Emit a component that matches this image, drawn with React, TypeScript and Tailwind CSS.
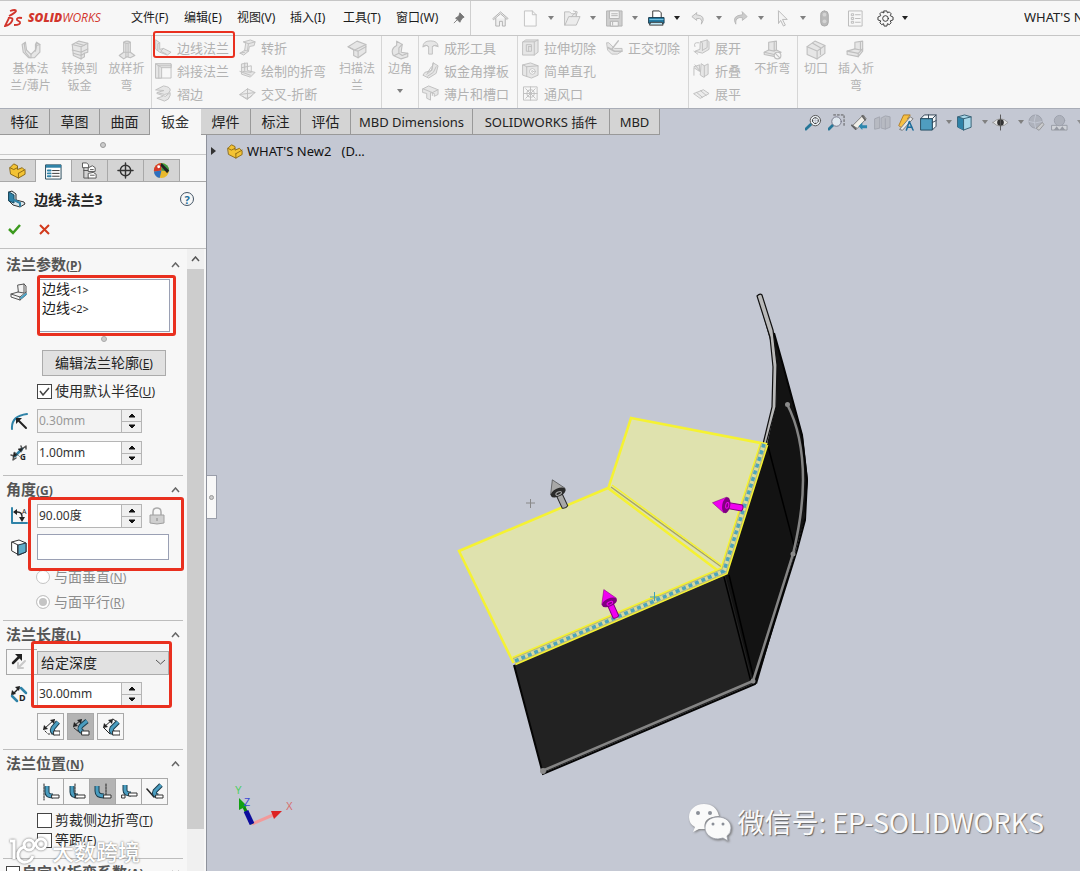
import React, { useState } from "react";

type IconProps = { children: React.ReactNode; size?: number; box?: number };

function Svg({ children, size = 18, box = 18 }: IconProps) {
  return (
    <svg width={size} height={size} viewBox={`0 0 ${box} ${box}`} fill="none" strokeLinejoin="round" strokeLinecap="round" className="shrink-0" aria-hidden="true">
      {children}
    </svg>
  );
}

const G = "#bfbfbf";
const L = "#e6e6e6";

/* Greyed ribbon drawings */
const ribbonIcons: Record<string, React.ReactNode> = {
  base: <g stroke={G} fill={L}><path d="M1 4l3-2 1 7 4 4 4-4 1-7 3 2v7l-5 5H7l-5-5z" /><path d="M4 2l-1 2 1 7 4 5M14 2l-1 2v5M9 13v3M17 4l-3 1-1 5" fill="none" /></g>,
  convert: <g stroke={G} fill={L}><path d="M2 4l6-3 8 2v8l-3 1v3l-3 2-7-3z" /><path d="M2 4l8 2 6-3M10 6v5l6-3M2 9l8 2v6M3 12l7 2 3-2M6 3l7 2" fill="none" /></g>,
  loft: <g stroke={G} fill={L}><path d="M6 2q3-2 6 0v9l4 3-4 2-3-1-3 2-4-3 4-3z" /><path d="M6 2q3 2 6 0M6 11h6M8 3v12M10 3v12" fill="none" /></g>,
  edge: <g stroke={G} fill={L}><path d="M1 1l4 3v7l4-1 8 4-4 3-8-3-4-3z" /><path d="M5 4L3 5v7M9 10l-3 3 6 3" fill="none" /></g>,
  miter: <g stroke={G} fill={L}><path d="M1 2h16v15H1z" fill="#f7f7f7" /><path d="M1 2h16v4H7v11H1z" /><path d="M3 4h14M4 5v12M1 2l6 4" fill="none" /></g>,
  hem: <g stroke={G} fill={L}><path d="M1 5l8-4q8 1 7 5t-6 4l-8-2 7-2z" /><path d="M2 9l9 3 5-4v3q-1 5-6 6l-8-3 6-2" /></g>,
  jog: <g stroke={G} fill={L}><path d="M5 3l7-2 5 2-1 4-5 1-1 5-5 4-4-2 5-3 1-7z" /><path d="M5 3l5 2 7-2M10 5l-1 7M6 12l4 1M1 15l5-1" fill="none" /></g>,
  sketchBend: <g stroke={G} fill={L}><path d="M3 2l6-1v8l8 2-5 5-9-3z" /><path d="M3 6l10-2v7L4 10M1 10l11 4M6 1v8" fill="none" /></g>,
  cross: <g stroke={G} fill="#ececec"><path d="M1 10l8-6 8 4-8 7z" /><path d="M9 4v11M1 10l16-2M4 12q5 5 10-1" fill="none" /></g>,
  sweep: <g stroke={G} fill={L}><path d="M1 6l8-5 8 3v7l-7 5-4-2V9z" /><path d="M1 6l6 3 10-5M6 9l4 1v6M10 10l7-4" fill="none" /></g>,
  corner: <g stroke={G} fill={L}><path d="M6 1l5 3-1 7 6 1v3l-6 2-7-3q-3-6 3-9z" /><path d="M11 4L8 7v5l3 2 5-2M8 12l-4 2" fill="none" /></g>,
  form: <g stroke={G} fill={L}><path d="M1 8Q1 2 9 2t8 6l-4-1-2 1v8H7V8L5 7z" /><path d="M1 8q3-3 6 0M11 8q3-3 6 0" fill="none" /></g>,
  gusset: <g stroke={G} fill={L}><path d="M12 1l5 3-2 8-8 5-6-3 2-3 7-2z" /><path d="M12 1l-2 8-5 4M15 5l-3 6-6 4M10 5l-4 6" fill="none" /></g>,
  slot: <g stroke={G} fill={L}><path d="M1 4l6-3 10 4v5l-4 2v-3l-4-1v8l-4-2V9L1 8z" /><path d="M1 4l10 4 6-3M11 8v3" fill="none" /></g>,
  cut: <g stroke={G} fill={L}><path d="M1 3l3-2h13v13l-4 3H1z" /><path d="M1 3h12l4-2M13 3v14M5 6h5v7H5zM7 8v5M7 8h3" fill="none" /></g>,
  hole: <g stroke={G} fill={L}><path d="M1 3l8-2 8 3v10l-7 3-9-3z" /><path d="M1 3l4 2v10M5 5l12-1" fill="none" /><circle cx="11" cy="10" r="3" fill="#fff" /><circle cx="11" cy="10" r="1" fill="none" /></g>,
  vent: <g stroke={G}><path d="M2 2h14v14H2zM2 9h14M9 2v14M4 4l10 10M14 4L4 14" /><circle cx="9" cy="9" r="4" /></g>,
  normal: <g stroke={G} fill={L}><path d="M1 4h2l6 6h8v3l-5 3H6l-4-4z" /><path d="M13 2L6 11M2 9l7 4h8" fill="none" strokeWidth="1.6" /></g>,
  unfold: <g stroke={G} fill={L}><path d="M8 3l7-2 2 2v8l-7 4-8-2 5-2z" /><path d="M8 3l2 1v8M2 8q-2-5 4-4M1 13l4 3M15 1v8l-5 3" fill="none" /></g>,
  fold: <g stroke={G} fill={L}><path d="M9 2l3 2 4-2v11l-5 3-3-2z" /><path d="M12 4v12M1 14V6l6 4V3L1 5" /><path d="M2 3l5 6" /></g>,
  flatten: <g stroke={G} fill="#ececec"><path d="M1 9l10-4 6 4-9 5z" /><path d="M4 8l6 5M8 6l6 5" fill="none" /></g>,
  nobend: <g stroke={G} fill={L}><path d="M6 2l7-1v8l4 2-5 4-10-2v-2l4-2z" /><path d="M6 9l5 1 2-1M2 11l9 2 6-2M11 2v8" fill="none" /><circle cx="14" cy="14" r="3" fill="#f7f7f7" /><path d="M12 12l4 4" /></g>,
  rip: <g stroke={G} fill={L}><path d="M1 6l7-5 9 4v7l-7 5-9-4z" /><path d="M1 6l9 4 7-5M10 10v7M6 3l7 4v6" fill="none" /></g>,
  insert: <g stroke={G} fill={L}><path d="M8 2l7-1v9l-4 5-10-2v-3l7-2z" /><path d="M8 8l5 1 2-1M1 10l10 2v3M11 12l4-4M13 2v7" fill="none" /></g>,
};

type LargeProps = { icon: string; lines: string[]; width: string; caret?: boolean };

function LargeTool({ icon, lines, width, caret }: LargeProps) {
  return (
    <button className={`flex flex-col items-center ${width} pt-1 text-[12px] leading-[17px] text-[#b2b2b2]`}>
      <Svg size={20}>{ribbonIcons[icon]}</Svg>
      <span className="flex flex-col items-center whitespace-nowrap">
        {lines.map((l) => <span key={l}>{l}</span>)}
      </span>
      {caret && <span className="mt-3"><Caret /></span>}
    </button>
  );
}

function SmallTool({ icon, label, marked }: { icon: string; label: string; marked?: boolean }) {
  return (
    <button className="relative flex h-[23px] items-center gap-[5px] text-[13px] leading-[18px] whitespace-nowrap text-[#b2b2b2]">
      <Svg size={17}>{ribbonIcons[icon]}</Svg>
      {label}
      {marked && <span className="pointer-events-none absolute -top-[5px] -left-[2px] z-10 h-[27px] w-[82px] rounded-[3px] border-[2px] border-[#e9301f]" />}
    </button>
  );
}

function ToolColumn({ items, width }: { items: [string, string][]; width: string }) {
  return (
    <div className={`flex flex-col items-start ${width}`}>
      {items.map(([icon, label]) => <SmallTool key={label} icon={icon} label={label} marked={icon === "edge"} />)}
    </div>
  );
}

function Caret({ dark }: { dark?: boolean }) {
  return (
    <svg width="6" height="4" viewBox="0 0 6 4" aria-hidden="true">
      <path d="M0 0h6L3 4z" fill={dark ? "#222" : "#808080"} />
    </svg>
  );
}

function Header() {
  const menus = ["文件(F)", "编辑(E)", "视图(V)", "插入(I)", "工具(T)", "窗口(W)"];
  return (
    <header className="flex h-9 shrink-0 items-center border-y border-[#c6c6c6] bg-[#f7f7f7]">
      <div className="flex w-[124px] shrink-0 items-center gap-[5px] pl-1 text-[#d2352c]">
        <svg width="19" height="19" viewBox="0 0 19 19" fill="none" stroke="currentColor" strokeWidth="1.8" aria-label="DS">
          <path d="M6 2q6-2 6 0-1 2-7 5M4 9q6-1 4 3-2 4-7 5l4-8" />
          <path d="M18 9q-6-1-5 2l3 2q1 3-6 3" />
        </svg>
        <span className="font-['Open_Sans'] text-[12px] leading-4 italic"><b className="font-extrabold">SOLID</b>WORKS</span>
      </div>
      <nav className="flex h-full w-[347px] shrink-0 items-center border-r border-[#cfcfcf] pl-[7px] text-[12px] whitespace-nowrap text-[#1c1c1c]">
        {menus.map((m) => <button key={m} className="w-[53px] shrink-0 text-left">{m}</button>)}
        <button aria-label="Pin">
          <svg width="12" height="12" viewBox="0 0 14 14" className="ml-1" fill="#777" stroke="#777"><path d="M8 1l5 5-2 1-2 3-1 2-5-5 2-1 2-2zM5 9l-4 4" /></svg>
        </button>
      </nav>
      <div className="flex shrink-0 items-center pl-[15px]">
        <Quick width="w-7" label="Home"><path d="M1 9l8-7 8 7-1 1-7-6-7 6zM4 9v8h4v-5h3v5h3V9" stroke="#b0b0b0" fill="#efefef" /></Quick>
        <Quick label="New" caret><path d="M3 1h8l4 4v12H3zM11 1v4h4" stroke="#c2c2c2" fill="#fafafa" /></Quick>
        <Quick label="Open" caret><path d="M1 2h5l2 2h5v3h4l-4 9H1zM1 16l4-9h8" stroke="#bcbcbc" fill="#ececec" /><path d="M8 7l5-5M10 1l4 1-1 4" stroke="#bcbcbc" /></Quick>
        <Quick label="Save" caret><path d="M1 1h16v16H1z" stroke="#b2b2b2" fill="#cfcfcf" /><path d="M4 1h10v8H4zM5 12h8v5H5z" fill="#f2f2f2" stroke="#b2b2b2" /><path d="M6 4h6M6 6h6M7 13v3" stroke="#b2b2b2" /></Quick>
        <Quick label="Print" caret dark><path d="M5 8V1h7l2 2v5" fill="#fff" stroke="#333" /><path d="M1 8h16v6H1z" fill="#257ca4" stroke="#15384b" /><path d="M3 13h12l1 3H2z" fill="#bde6f4" stroke="#333" /><path d="M2 10h14" stroke="#83c8e4" /></Quick>
        <Quick label="Undo" caret><path d="M7 3L2 7l5 4V9q7-1 5 6 6-9-5-10z" fill="#e2e2e2" stroke="#b9b9b9" /></Quick>
        <Quick label="Redo" caret><path d="M11 2l5 5-5 4V8q-8-1-7 7-5-9 7-10z" fill="#ccc" stroke="#b9b9b9" /></Quick>
        <Quick label="Select" caret><path d="M5 1l9 9H9l3 6-2 1-3-6-2 3z" fill="#f4f4f4" stroke="#b9b9b9" /></Quick>
        <Quick label="Rebuild"><rect x="5" y="1" width="8" height="16" rx="4" fill="#bababa" stroke="#a8a8a8" /><circle cx="9" cy="5" r="2" fill="#d4d4d4" /><circle cx="9" cy="12" r="2" fill="#d4d4d4" /></Quick>
        <Quick width="w-[30px]" label="File properties"><path d="M2 1h14v16H2zM5 4h2v2H5zM5 8h2v2H5zM5 12h2v2H5zM9 5h5M9 9h5M9 13h5" stroke="#bababa" /></Quick>
        <Quick width="w-[30px]" label="Options" caret dark>
          <path d="M7.500 1h3l.5 2 2-1 2 2-1 2 3 1.500v3l-3 1 1 2-2 2-2-1-.5 2.500h-3L7 14.500l-2 1-2-2 1-2-3-1v-3L4 6 3 4l2-2 2 1z" stroke="#333" /><circle cx="9" cy="9" r="3" stroke="#333" />
        </Quick>
      </div>
      <div className="ml-auto w-14 shrink-0 overflow-hidden text-[13px] whitespace-nowrap text-[#222]">WHAT'S New2</div>
    </header>
  );
}

function Quick({ children, label, width = "w-8", caret, dark }: { children: React.ReactNode; label: string; width?: string; caret?: boolean; dark?: boolean }) {
  return (
    <button aria-label={label} className="flex h-8 items-center">
      <span className={`flex justify-center ${width}`}><Svg size={17}>{children}</Svg></span>
      {caret && <span className="flex w-[10px] justify-center"><Caret dark={dark} /></span>}
    </button>
  );
}

function Ribbon() {
  return (
    <div className="flex h-[72px] shrink-0 bg-[#f7f7f7] *:border-[#d6d6d6]">
      <div className="flex w-[152px] shrink-0 border-r pl-[6px]">
        <LargeTool icon="base" lines={["基体法", "兰/薄片"]} width="w-[49px]" />
        <LargeTool icon="convert" lines={["转换到", "钣金"]} width="w-[49px]" />
        <LargeTool icon="loft" lines={["放样折", "弯"]} width="w-[45px]" />
      </div>
      <div className="flex w-[230px] shrink-0 border-r pl-[3px]">
        <ToolColumn width="w-[84px]" items={[["edge", "边线法兰"], ["miter", "斜接法兰"], ["hem", "褶边"]]} />
        <ToolColumn width="w-[95px]" items={[["jog", "转折"], ["sketchBend", "绘制的折弯"], ["cross", "交叉-折断"]]} />
        <LargeTool icon="sweep" lines={["扫描法", "兰"]} width="w-[46px]" />
      </div>
      <div className="flex w-[37px] shrink-0 border-r">
        <LargeTool icon="corner" lines={["边角"]} width="w-full" caret />
      </div>
      <div className="flex w-[99px] shrink-0 border-r pl-[3px]">
        <ToolColumn width="w-full" items={[["form", "成形工具"], ["gusset", "钣金角撑板"], ["slot", "薄片和槽口"]]} />
      </div>
      <div className="flex w-[171px] shrink-0 border-r pl-1">
        <ToolColumn width="w-[84px]" items={[["cut", "拉伸切除"], ["hole", "简单直孔"], ["vent", "通风口"]]} />
        <ToolColumn width="w-[80px]" items={[["normal", "正交切除"]]} />
      </div>
      <div className="flex w-[109px] shrink-0 border-r pl-1">
        <ToolColumn width="w-[55px]" items={[["unfold", "展开"], ["fold", "折叠"], ["flatten", "展平"]]} />
        <LargeTool icon="nobend" lines={["不折弯"]} width="w-[50px]" />
      </div>
      <div className="flex">
        <LargeTool icon="rip" lines={["切口"]} width="w-[36px]" />
        <LargeTool icon="insert" lines={["插入折", "弯"]} width="w-[44px]" />
      </div>
    </div>
  );
}

const tabs: [string, string][] = [
  ["特征", "w-[50px]"],
  ["草图", "w-[50px]"],
  ["曲面", "w-[50px]"],
  ["钣金", "w-[51px]"],
  ["焊件", "w-[50px]"],
  ["标注", "w-[50px]"],
  ["评估", "w-[50px]"],
  ["MBD Dimensions", "w-[122px]"],
  ["SOLIDWORKS 插件", "w-[137px]"],
  ["MBD", "w-[50px]"],
];

function TabBar() {
  const [active, setActive] = useState("钣金");
  return (
    <div className="flex h-[27px] shrink-0 border-t border-[#a9adb7] bg-[#c4c8d3]">
      <div className="flex shrink-0" role="tablist">
        {tabs.map(([name, width]) => (
          <button
            key={name}
            role="tab"
            aria-selected={active === name}
            onClick={() => setActive(name)}
            className={`${width} border-r leading-6 whitespace-nowrap ${active === name ? "border-[#f7f7f7] bg-[#f7f7f7] text-[#333]" : "border-b border-[#999] bg-[#d4d4d4] text-[#222]"} ${/^[A-Z]/.test(name) ? "text-[13px]" : "text-[14px]"}`}
          >
            {name}
          </button>
        ))}
      </div>
      <ViewTools />
    </div>
  );
}

function ViewTools() {
  return (
    <div className="ml-auto flex w-[276px] shrink-0 items-center overflow-hidden">
      <Look label="Zoom to fit"><path d="M1 16l5-5" stroke="#277798" strokeWidth="3" /><circle cx="11" cy="7" r="5.500" fill="#e9eef2" stroke="#555" /><path d="M11 4v6M8 7h6" stroke="#c4c8d3" /><path d="M9 5l1-1h2l1 1M9 9l1 1h2l1-1M8 6v2M14 6v2" stroke="#333" /></Look>
      <Look label="Zoom to area"><path d="M1 16l4-4" stroke="#277798" strokeWidth="3" /><circle cx="9" cy="8" r="5" fill="#dfe7ee" stroke="#778" /><path d="M6 1h11v11" stroke="#555" strokeDasharray="2 2" /></Look>
      <Look label="Previous view"><path d="M2 12L13 1l3 4-9 10z" fill="#f1efe8" stroke="#777" /><path d="M1 12l4 4M12 2l3 4" stroke="#666" strokeWidth="2" /><path d="M8 13l4-4v3h5v3h-5v2z" fill="#2c87ae" /></Look>
      <Look label="Section view"><path d="M1 5l5-2v12l-5 1zM8 4l4-2 5 1v11l-5 2-4-1zM12 5v11" fill="#b7bac2" stroke="#a3a6af" /></Look>
      <Look label="Annotations"><path d="M2 12L7 1h7l-3 4h4l-10 9z" fill="#f6c043" stroke="#b27b1f" /><path d="M3 16L14 3l3 2L6 17z" fill="#e9e9e9" stroke="#777" /><path d="M10 17l3-9 4 9M11 14h5" stroke="#1d6d9a" strokeWidth="1.600" /></Look>
      <Look label="View orientation" caret><path d="M5 1h12v12l-4 4V5H1z" fill="#f3f6f8" stroke="#345" /><path d="M1 5h12v12H1z" fill="#4f9dc0" stroke="#244c61" /><path d="M13 5l4-4M9 1v4M13 9l4-2" stroke="#345" /></Look>
      <Look label="Display style" caret><path d="M2 3l7-2 7 2v11l-8 3-6-3z" fill="#a8d7e8" stroke="#345f74" /><path d="M2 3l6 2v12l-6-3z" fill="#2f83a8" /><path d="M2 3l6 2 8-2M8 5v12" stroke="#345f74" /></Look>
      <Look label="Hide and show" caret><path d="M1 9q8-8 16 0-8 8-16 0z" fill="#e3e3e3" stroke="#999" /><circle cx="9" cy="9" r="3.500" fill="#333" /><path d="M9 1v16" stroke="#555" /></Look>
      <Look label="Edit appearance" faded><circle cx="8" cy="8" r="7" fill="#a9adb7" stroke="#9397a1" /><path d="M1 8q7 3 14 0M8 1q-3 7 0 14" stroke="#c4c8d3" /><path d="M9 15l6-6 2 2-5 6z" fill="#ccc" stroke="#888" /></Look>
      <Look label="Apply scene" caret faded><path d="M1 12h16v5H1z" fill="#d4d6da" stroke="#8b8f98" /><path d="M3 17l3-4 3 4 3-4 3 4z" fill="#8b8f98" /><circle cx="9" cy="7" r="5.500" fill="#a9adb7" stroke="#9397a1" /></Look>
    </div>
  );
}

function Look({ children, label, caret, faded }: { children: React.ReactNode; label: string; caret?: boolean; faded?: boolean }) {
  return (
    <button aria-label={label} className={`flex shrink-0 items-center ${faded ? "opacity-80" : ""}`}>
      <span className="flex w-[23px] justify-center pr-1"><Svg size={17}>{children}</Svg></span>
      {caret && <span className="flex w-[13px] justify-center"><Caret /></span>}
    </button>
  );
}

/* Property manager */

function Hot({ text, letter }: { text: string; letter: string }) {
  return <span>{text}<span className="text-[12px]">(<u className="underline-offset-1">{letter}</u>)</span></span>;
}

function Section({ title, letter, className = "", children }: { title: string; letter: string; className?: string; children: React.ReactNode }) {
  const [open, setOpen] = useState(true);
  return (
    <section className={`relative pt-[2px] ${className}`}>
      <button onClick={() => setOpen(!open)} aria-expanded={open} className="mb-[2px] flex h-6 w-full items-center justify-between pr-[7px] pl-[6px] text-[15px] leading-6 font-bold text-[#555]">
        <Hot text={title} letter={letter} />
        <svg width="9" height="6" viewBox="0 0 9 6" fill="none" stroke="#666" strokeWidth="1.5" aria-hidden="true"><path d={open ? "M1 5l3.500-4L8 5" : "M1 1l3.500 4L8 1"} /></svg>
      </button>
      {open && children}
    </section>
  );
}

function Rule() {
  return <div className="mr-1 ml-[3px] h-px bg-[#bdbdbd]" />;
}

function Row({ icon, className = "", align = "items-center", children }: { icon?: React.ReactNode; className?: string; align?: string; children: React.ReactNode }) {
  return (
    <div className={`flex ${align} ${className}`}>
      <div className="flex w-[37px] shrink-0 justify-center">{icon}</div>
      {children}
    </div>
  );
}

function Spin({ label, value, disabled }: { label: string; value: string; disabled?: boolean }) {
  const [text, setText] = useState(value);
  const step = (by: number) => setText((t) => t.replace(/^[\d.]+/, (n) => Math.max(0, Number(n) + by).toFixed(2)));
  return (
    <div className="flex h-6 w-[105px] border border-[#b5b5b5]">
      <input
        aria-label={label}
        value={text}
        disabled={disabled}
        onChange={(e) => setText(e.target.value)}
        className="w-0 min-w-0 grow bg-white pl-px text-[12px] text-[#333] outline-none disabled:bg-[#f3f3f3] disabled:text-[#999]"
      />
      <div className="flex w-5 flex-col bg-[#efefef]">
        <button aria-label={`${label} +`} disabled={disabled} onClick={() => step(1)} className="flex flex-1 items-center justify-center border-b border-l border-[#b5b5b5]"><svg width="8" height="5" viewBox="0 0 8 5"><path d="M1 4h6L4 1z" fill="#111" stroke="#111" /></svg></button>
        <button aria-label={`${label} -`} disabled={disabled} onClick={() => step(-1)} className="flex flex-1 items-center justify-center border-l border-[#b5b5b5]"><svg width="8" height="5" viewBox="0 0 8 5"><path d="M1 1h6L4 4z" fill="#111" stroke="#111" /></svg></button>
      </div>
    </div>
  );
}

function Check({ text, letter, defaultChecked, className = "" }: { text: string; letter: string; defaultChecked?: boolean; className?: string }) {
  return (
    <label className={`relative flex h-5 items-center gap-[3px] pl-[37px] text-[14px] leading-5 text-[#2b2b2b] ${className}`}>
      <input type="checkbox" defaultChecked={defaultChecked} className="peer size-[15px] shrink-0 appearance-none border border-[#444] bg-white" />
      <svg width="11" height="9" viewBox="0 0 11 9" className="pointer-events-none absolute left-[39px] hidden peer-checked:block" fill="none" stroke="#444" strokeWidth="1.500"><path d="M1 4l3 4 6-7" /></svg>
      <Hot text={text} letter={letter} />
    </label>
  );
}

function Mark({ className }: { className: string }) {
  return <div className={`pointer-events-none absolute z-10 rounded-[3px] border-[3px] border-[#e9301f] ${className}`} />;
}

const cBlue = "#2f83a8";

/* Bent plate profile: dark outline with a blue core */
function Bend({ d }: { d: string }) {
  return (
    <g strokeLinecap="butt">
      <path d={d} stroke="#1b3c4c" strokeWidth="5" />
      <path d={d} stroke="#4a9dc0" strokeWidth="3" />
    </g>
  );
}

const lengthIcons = [
  <g key="a"><path d="M2 11L12 2" stroke="#222" /><path d="M1 12l1-5 4 4zM13 1L8 2l4 4z" fill="#222" /><Bend d="M16 4l-5 6q-2 4 2 5" /><path d="M3 13l3 3h4" stroke="#333" strokeDasharray="2 2" /><path d="M12 13h6v4h-6z" fill="#fff" stroke="#333" /></g>,
  <g key="b"><path d="M2 8l7-6" stroke="#222" /><path d="M1 9l1-5 4 4zM10 1L5 2l4 4z" fill="#222" /><path d="M2 10l5 4" stroke="#222" strokeDasharray="2 1" /><Bend d="M15 3L9 8q-3 4 2 6" /><path d="M10 13h7v4h-7z" fill="#fff" stroke="#333" /></g>,
  <g key="c"><path d="M2 9l8-7" stroke="#222" /><path d="M1 10l1-5 4 4zM11 1L6 2l4 4z" fill="#222" /><path d="M2 10l6 6M11 1l4 3" stroke="#222" /><Bend d="M16 4l-6 6q-2 4 2 5" /><path d="M11 13h7v4h-7z" fill="#fff" stroke="#333" /></g>,
];

const positionIcons = [
  <g key="a"><path d="M2 1v16" stroke="#222" strokeDasharray="2 1" /><Bend d="M5 3v6q0 4 6 4" /><path d="M10 12h7v3h-7z" fill="#fff" stroke="#333" /></g>,
  <g key="b"><Bend d="M4 3v6q0 4 6 4" /><path d="M7 1v14" stroke="#222" strokeDasharray="2 1" /><path d="M8 12h9v3H8z" fill="#fff" stroke="#333" /></g>,
  <g key="c"><path d="M12 1v11" stroke="#222" strokeDasharray="2 1" /><Bend d="M3 3v5q0 5 7 5" /><path d="M10 12h7v3h-7z" fill="#fff" stroke="#333" /></g>,
  <g key="d"><Bend d="M5 2v5q0 4 6 4" /><path d="M9 10h8v3H9zM2 12h3v3H2z" fill="#fff" stroke="#333" /></g>,
  <g key="e"><path d="M1 6l7 8" stroke="#222" strokeWidth="1.500" /><Bend d="M15 2l-6 6q-2 4 3 5" /><path d="M10 12h7v3h-7z" fill="#fff" stroke="#333" /></g>,
];

function PropertyPanel() {
  const [length, setLength] = useState(1);
  const [position, setPosition] = useState(2);
  const paneTabs = [
    <g key="part"><path d="M1 6l4-4 4 2v4l5-2 3 3v4l-7 4-8-4z" fill="#f3c334" stroke="#8a6712" /><path d="M1 6l4 2 4-2M10 12l7-4M10 12v5" stroke="#8a6712" /></g>,
    <g key="prop"><path d="M1 2h16v15H1z" fill="#fff" stroke="#245" /><path d="M1 2h16v3H1z" fill={cBlue} /><path d="M3 8h3M3 11h3M3 14h3" stroke={cBlue} strokeWidth="2" /><path d="M8 8h7M8 11h7M8 14h7" stroke="#333" /></g>,
    <g key="conf" stroke="#555" fill="#fff"><path d="M3 5v12h5M3 9h4" fill="none" /><path d="M2 1h4l2 2v3H2zM8 6l4-2 3 2v4H8zM8 12l5-1 3 2v4H8z" /><path d="M10 8h3M10 14h4" /></g>,
    <g key="dim" stroke="#333" strokeWidth="1.500"><circle cx="9" cy="9" r="5.500" /><path d="M9 1v16M1 9h16" /></g>,
    <g key="disp"><circle cx="9" cy="9" r="8" fill="#e9b92d" /><path d="M9 9L1 10a8 8 0 0 1 8-9z" fill="#d63b2b" /><path d="M9 1a8 8 0 0 1 8 9L9 9z" fill="#3d9b49" /><path d="M9 9L1 10a8 8 0 0 0 6 7z" fill="#2d6fc0" /><path d="M9 1l8 8-2 3-7-8z" fill="#222" /><circle cx="6" cy="5" r="1.500" fill="#fff" /></g>,
  ];

  return (
    <aside className="flex w-[207px] shrink-0 flex-col overflow-hidden border-r border-[#8e929c] bg-[#f7f7f7]">
      <div className="flex h-5 shrink-0 items-center justify-center border-b border-[#c9c9c9]"><span className="size-[6px] rounded-full border border-[#999] bg-[#ccc]" /></div>
      <div className="mt-1 flex h-[23px] shrink-0">
        {paneTabs.map((icon, i) => (
          <button key={i} aria-label={`Pane ${i + 1}`} className={`flex w-9 items-center justify-center border-t border-r border-[#a8a8a8] ${i === 1 ? "bg-[#f7f7f7]" : "border-b bg-[#d4d4d4]"}`}><Svg size={17}>{icon}</Svg></button>
        ))}
        <span className="grow border-b border-[#a8a8a8]" />
      </div>
      <div className="flex h-[34px] shrink-0 items-center pr-3 pl-2">
        <Svg><path d="M1 2l3-1 4 3v6l8 2 1 2-5 3-7-2-4-4z" fill="#dbe6eb" stroke="#333" /><path d="M1 2l5 3v8l-5-2z" fill={cBlue} stroke="#174a62" /><path d="M6 10l6 3v3" stroke={cBlue} strokeWidth="2" /></Svg>
        <h1 className="pl-2 text-[14px] font-bold text-[#222]">边线-法兰3</h1>
        <button aria-label="Help" className="ml-auto flex size-[14px] items-center justify-center rounded-full border border-[#456] text-[11px] leading-none font-bold text-[#1d6f9b]">?</button>
      </div>
      <div className="flex h-[33px] shrink-0 items-start gap-[18px] border-b border-[#c0c0c0] pt-[6px] pl-2">
        <button aria-label="OK"><svg width="13" height="14" viewBox="0 0 13 14" fill="none" stroke="#3c9a1e" strokeWidth="2.500"><path d="M1 7l4 4 7-8" /></svg></button>
        <button aria-label="Cancel"><svg width="11" height="14" viewBox="0 0 11 14" fill="none" stroke="#d23a1c" strokeWidth="2"><path d="M1 3l9 9M10 3l-9 9" /></svg></button>
      </div>

      <div className="flex min-h-0 grow">
        <div className="w-[187px] shrink-0 overflow-hidden">
          <Section title="法兰参数" letter="P" className="mt-[2px] pb-[10px]">
            <Row align="items-start" icon={<span className="pt-1"><Svg><path d="M8 2l6-1 2 2v9l-6 5-9-3v-3l7-2z" fill="#f2f2f2" stroke="#555" /><path d="M8 9l6 1V1M1 11l9 3v3M10 14l6-5" stroke="#555" /><path d="M11 15l5-4" stroke="#4aa0c4" strokeWidth="2" /></Svg></span>}>
              <div className="relative w-[133px]">
                <ul className="h-[53px] border border-[#9aa0b4] bg-white pl-1 text-[14px] leading-[18px] text-[#222]">
                  <li>边线<span className="text-[11px]">&lt;1&gt;</span></li>
                  <li>边线<span className="text-[11px]">&lt;2&gt;</span></li>
                </ul>
                <Mark className="-top-1 -right-[6px] -bottom-1 left-0" />
              </div>
            </Row>
            <div className="flex h-[14px] items-center justify-center pl-5"><span className="size-[6px] rounded-full border border-[#aaa] bg-[#ccc]" /></div>
            <button className="mt-1 ml-[42px] h-[26px] w-[124px] border border-[#ababab] bg-[#e1e1e1] text-[14px] leading-6 text-[#222]"><Hot text="编辑法兰轮廓" letter="E" /></button>
            <Check text="使用默认半径" letter="U" defaultChecked className="mt-[5px]" />
            <Row className="mt-2" icon={<Svg><path d="M2 17Q1 4 17 2" stroke={cBlue} strokeWidth="2" /><path d="M16 16L8 8" stroke="#222" strokeWidth="2" /><path d="M6 6h6l-6 6z" fill="#222" /></Svg>}>
              <Spin label="Bend radius" value="0.30mm" disabled />
            </Row>
            <Row className="mt-2" icon={<Svg><path d="M1 11l3 1-1 4 3-2M11 2l1 3 4-3v3" stroke="#555" strokeWidth="1.500" /><path d="M5 12l7-7" stroke={cBlue} strokeWidth="2.500" /><path d="M5 8l5 5M3 13l1-5 3 3zM13 4l-5 1 3 3z" fill="#222" stroke="#333" strokeWidth="0.500" /><text x="10" y="16" fontSize="8" fontWeight="bold" fill="#222">G</text></Svg>}>
              <Spin label="Gap distance" value="1.00mm" />
            </Row>
          </Section>
          <Rule />

          <Section title="角度" letter="G" className="pb-2">
            <div className="relative">
              <Row icon={<Svg><path d="M2 1v15h15" stroke={cBlue} strokeWidth="2" /><path d="M6 5q7-1 6 7" stroke="#222" strokeWidth="1.500" /><path d="M3 5l4-3v6zM9 10h6l-3 5z" fill="#222" /><text x="12" y="7" fontSize="7" fill="#222">A</text></Svg>}>
                <Spin label="Flange angle" value="90.00度" />
                <button aria-label="Lock" className="ml-[7px]"><svg width="16" height="18" viewBox="0 0 16 18"><path d="M4 8V5q0-4 4-4t4 4v3" fill="none" stroke="#aaa" strokeWidth="1.500" /><path d="M1 8h14v8q-7 2-14 0z" fill="#cfcfcf" stroke="#a0a0a0" /><path d="M8 11v3" stroke="#888" /></svg></button>
              </Row>
              <Row className="mt-[6px]" icon={<Svg><path d="M2 4l7-2 7 3v9l-7 3-7-4z" fill="#fff" stroke="#333" /><path d="M8 7l8-2v9l-8 3z" fill="#5eacc9" stroke="#234" /><path d="M2 4l6 3v10" stroke="#333" /></Svg>}>
                <input aria-label="Face" className="h-[26px] w-[132px] border border-[#9aa0b4] bg-white px-1 text-[12px] outline-none" />
              </Row>
              <Mark className="-top-[7px] right-[3px] -bottom-[11px] left-[28px]" />
            </div>
            <label className="mt-[7px] flex h-5 items-center gap-1 pl-9 text-[14px] leading-5 text-[#8d8d8d]">
              <input type="radio" name="face" disabled className="size-[14px] appearance-none rounded-full border border-[#c4c4c4] bg-white" />
              <Hot text="与面垂直" letter="N" />
            </label>
            <label className="mt-[5px] flex h-5 items-center gap-1 pl-9 text-[14px] leading-5 text-[#8d8d8d]">
              <input type="radio" name="face" disabled defaultChecked className="size-[14px] appearance-none rounded-full border border-[#c4c4c4] bg-[#c4c4c4] shadow-[inset_0_0_0_2px_#fff]" />
              <Hot text="与面平行" letter="R" />
            </label>
          </Section>
          <Rule />

          <Section title="法兰长度" letter="L" className="pb-[9px]">
            <div className="relative">
              <div className="flex h-[26px] items-center pl-[6px]">
                <button aria-label="Reverse direction" className="flex h-[26px] w-[31px] items-center border border-r-0 border-[#a9a9a9] pl-1"><Svg><path d="M2 10l6-6" stroke="#222" strokeWidth="2.500" /><path d="M4 1h7v7z" fill="#222" /><path d="M14 8l-6 6M7 10v5h5" stroke="#c9c9c9" strokeWidth="2" /></Svg></button>
                <div className="relative">
                  <select aria-label="End condition" className="h-6 w-[132px] appearance-none border border-[#ababab] bg-[#e1e1e1] pl-[3px] text-[14px] leading-5 text-[#222]">
                    <option>给定深度</option>
                  </select>
                  <svg width="9" height="6" viewBox="0 0 9 6" className="pointer-events-none absolute top-[9px] right-1" fill="none" stroke="#555"><path d="M0 1l4.500 4L9 1" /></svg>
                </div>
              </div>
              <Row className="mt-[7px]" icon={<Svg><path d="M3 9l6-6" stroke="#222" strokeWidth="1.500" /><path d="M1 10l1-5 4 4zM10 1L5 2l4 4z" fill="#222" /><path d="M2 11l5 5M11 3l5 5" stroke={cBlue} strokeWidth="2.500" /><text x="9" y="16" fontSize="9" fontWeight="bold" fill="#222">D</text></Svg>}>
                <Spin label="Length" value="30.00mm" />
              </Row>
              <Mark className="-top-2 right-[15px] -bottom-[2px] left-[31px]" />
            </div>
            <div className="mt-[7px] flex gap-[3px] pl-[37px]">
              {lengthIcons.map((icon, i) => (
                <button key={i} aria-label={`Length option ${i + 1}`} aria-pressed={length === i} onClick={() => setLength(i)} className={`flex h-[27px] w-[27px] items-center justify-center border border-[#a9a9a9] ${length === i ? "bg-[#b4b4b4]" : "bg-[#f7f7f7]"}`}><Svg>{icon}</Svg></button>
              ))}
            </div>
          </Section>
          <Rule />

          <Section title="法兰位置" letter="N" className="pb-2">
            <div className="flex pl-[37px]">
              {positionIcons.map((icon, i) => (
                <button key={i} aria-label={`Position option ${i + 1}`} aria-pressed={position === i} onClick={() => setPosition(i)} className={`-mr-px flex h-[27px] w-[27px] items-center justify-center border border-[#a9a9a9] ${position === i ? "bg-[#b4b4b4]" : "bg-[#f7f7f7]"}`}><Svg>{icon}</Svg></button>
              ))}
            </div>
            <Check text="剪裁侧边折弯" letter="T" className="mt-[5px]" />
            <Check text="等距" letter="F" />
          </Section>
          <Rule />

          <label className="flex h-7 items-center gap-[2px] pl-[6px] text-[15px] leading-6 font-bold text-[#555]">
            <input type="checkbox" className="size-[14px] appearance-none border border-[#444] bg-white" />
            <Hot text="自定义折弯系数" letter="A" />
            <svg width="9" height="6" viewBox="0 0 9 6" className="mr-[7px] ml-auto" fill="none" stroke="#666" strokeWidth="1.500"><path d="M1 1l3.500 4L8 1" /></svg>
          </label>
        </div>
        <div className="flex w-[17px] flex-col bg-[#f0f0f0]">
          <div className="flex h-5 shrink-0 items-center justify-center"><svg width="9" height="6" viewBox="0 0 9 6" fill="none" stroke="#555" strokeWidth="1.500"><path d="M1 5l3.500-4L8 5" /></svg></div>
          <div className="h-9/10 bg-[#cdcdcd]" />
        </div>
      </div>
    </aside>
  );
}

function Arrow({ x, y, turn, dark, light }: { x: number; y: number; turn: number; dark: string; light: string }) {
  return (
    <g transform={`translate(${x} ${y}) rotate(${turn})`}>
      <path d="M-3 0v-16h6V0q-3 2-6 0z" fill={light} stroke={dark} />
      <path d="M-8-17L0-30l8 13q-8 5-16 0z" fill={light} stroke={dark} strokeWidth="0.500" />
      <ellipse cx="0" cy="-16" rx="8" ry="4" fill={dark} />
      <ellipse cx="0" cy="-15" rx="3" ry="1.500" fill="none" stroke={light} />
    </g>
  );
}

function Model() {
  return (
    <svg viewBox="207 135 873 736" preserveAspectRatio="xMinYMin meet" className="block w-full" role="img" aria-label="Sheet metal part">
      {/* dark sheet */}
      <path d="M514 665L727 574 755 683 543 773z" fill="#222" />
      <path d="M761 308L773 330 783 365 803 437 808 480 804 522 757 684 753 682 725 574 767 444 776 405 777 365z" fill="#131313" />
      <path d="M514 665L543 774 755 684 797 550 805 520 807 480 802 435 783 365 774 333" stroke="#050505" strokeWidth="2" fill="none" />
      <path d="M724 577l27 105M729 575l25 104M768 446l27 103" stroke="#000" strokeWidth="1.500" fill="none" />
      <path d="M757 296q3-3 5-1l11 35 4 35-1 42-10 37h-3l9-37 1-40-3-30z" fill="#b9b9b9" stroke="#111" strokeWidth="1.200" />
      {/* sketch line */}
      <path d="M787 404C798 425 803 450 803 480 803 515 795 545 793 554L753 681 542 771" stroke="#858585" strokeWidth="2.500" fill="none" />
      <g fill="#8b8b8b"><circle cx="787.500" cy="404.500" r="2.500" /><circle cx="793" cy="554" r="2.500" /><circle cx="753" cy="681" r="2.500" /><circle cx="543" cy="771" r="3" /></g>
      {/* preview flanges */}
      <path d="M459 551L608 488 723 572 513 662z" fill="#dfe2ae" stroke="#f5f232" strokeWidth="2.500" />
      <path d="M631 418L766 444 724 570 609 486z" fill="#dfe2ae" stroke="#f5f232" strokeWidth="2.500" />
      <path d="M610 487L722 570" stroke="#dfe2ae" strokeWidth="6" />
      <path d="M611 487L723 568" stroke="#a9a760" strokeWidth="1.500" />
      <path d="M608 488L721 573" stroke="#f5f232" strokeWidth="2.500" />
      <path d="M612 485L724 567" stroke="#f5f232" strokeWidth="1.500" />
      <path d="M514 661L724 571 764 444" fill="none" stroke="#f5f232" strokeWidth="9" />
      <path d="M514 661L724 571 764 444" fill="none" stroke="#b9b77b" strokeWidth="6" />
      <path d="M514 661L724 571 764 444" fill="none" stroke="#d9dc9c" strokeWidth="4" />
      <path d="M515 661L724 571 764 444" fill="none" stroke="#4fa5bb" strokeWidth="3.500" strokeDasharray="4 3" />
      <path d="M526 503h9M530.500 499v9" stroke="#888" />
      <path d="M650 597h9M654.500 592v9" stroke="#3ea0b7" />
      <Arrow x={565} y={507} turn={-25} dark="#2b2b2b" light="#a8a8a8" />
      <Arrow x={616} y={617} turn={-24} dark="#800080" light="#f000f0" />
      <Arrow x={742} y={508} turn={-80} dark="#800080" light="#f000f0" />
      {/* axis triad */}
      <path d="M252 824l21-9" stroke="#f29a9a" strokeWidth="3" />
      <path d="M271 811l11 0-8 8z" fill="#d22" />
      <path d="M252 824l-8-17" stroke="#0a8a0a" strokeWidth="3" />
      <path d="M239 798l8 8-8 4z" fill="#12a012" />
      <path d="M252 824l-6-13" stroke="#0c0c9c" strokeWidth="5" />
      <g fontFamily="Liberation Sans" fontSize="10"><text x="235" y="794" fill="#49cf5c">Y</text><text x="244" y="806" fill="#3a48d4">Z</text><text x="286" y="810" fill="#d86b6b">X</text></g>
    </svg>
  );
}

export default function App() {
  return (
    <div className="relative flex h-screen flex-col overflow-hidden bg-[#c4c8d3] font-['Noto_Sans','Noto_Sans_CJK_SC',sans-serif]">
      <Header />
      <Ribbon />
      <TabBar />
      <main className="flex min-h-0 grow">
        <PropertyPanel />
        <div className="relative min-w-0 grow overflow-hidden bg-[#c4c8d3]">
          <Model />
          <div className="absolute top-[6px] left-1 flex items-center gap-1 text-[13px] leading-5 whitespace-pre text-[#111]">
            <svg width="5" height="8" viewBox="0 0 5 8" className="mr-[7px]"><path d="M0 0l5 4-5 4z" fill="#333" /></svg>
            <Svg size={16}><path d="M1 6l4-4 4 2v4l5-2 3 3v4l-7 4-8-4z" fill="#f3c334" stroke="#8a6712" /><path d="M1 6l4 2 4-2M10 12l7-4M10 12v5" stroke="#8a6712" /></Svg>
            <span>{"WHAT'S New2   (D..."}</span>
          </div>
          <button aria-label="Collapse panel" className="absolute top-[340px] left-0 flex h-[44px] w-[10px] items-center justify-center border border-l-0 border-[#9a9eaa] bg-[#f7f7f7]"><span className="size-[5px] rounded-full border border-[#999] bg-[#ccc]" /></button>
          <div className="absolute right-9 bottom-[29px] flex items-center gap-[6px] text-[#fafafa]">
            <svg width="44" height="38" viewBox="0 0 44 38" className="drop-shadow-[1px_1px_1px_#777]">
              <path d="M16 1C7 1 1 7 1 14q0 7 6 10l-2 5 6-3h6q-3-12 14-13Q28 1 16 1z" fill="#fafafa" />
              <path d="M30 14c-8 0-13 5-13 11s6 11 13 11l5-1 5 3-1-5q4-3 4-8c0-6-5-11-13-11z" fill="#fafafa" stroke="#9a9ea8" strokeWidth="0.800" />
              <g fill="#8b8f98"><circle cx="10" cy="10" r="2" /><circle cx="22" cy="10" r="2" /><circle cx="25" cy="21" r="1.500" /><circle cx="35" cy="21" r="1.500" /></g>
            </svg>
            <span className="font-['Noto_Sans_CJK_SC',sans-serif] text-[27px] leading-10 whitespace-nowrap [text-shadow:1px_1px_1px_#666]">微信号: EP-SOLIDWORKS</span>
          </div>
        </div>
      </main>
      <div className="pointer-events-none absolute bottom-1 left-2 flex items-center gap-1 text-white">
        <svg width="40" height="30" viewBox="0 0 40 30" fill="none" stroke="#fff" strokeWidth="3" className="drop-shadow-[0_0_1px_#666]">
          <path d="M2 5h4v18M25 20q-3 7-10 6-6-2-5-9 2-6 8-6" /><circle cx="21" cy="9" r="5" /><circle cx="33" cy="8" r="5" />
        </svg>
        <span className="text-[22px] leading-8 font-medium [text-shadow:0_0_2px_#555]">大数跨境</span>
      </div>
    </div>
  );
}
